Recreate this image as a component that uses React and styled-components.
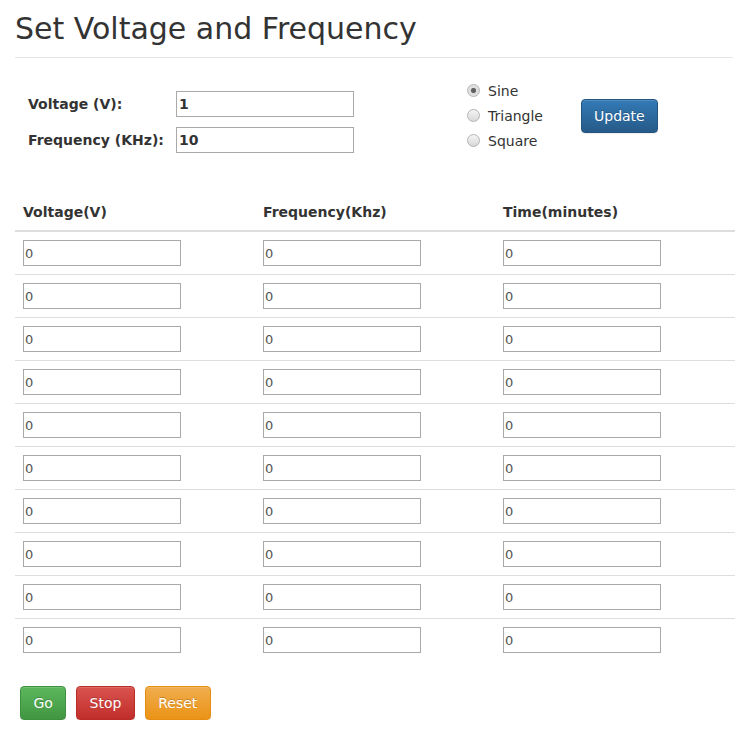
import styled, { createGlobalStyle } from "styled-components";

const GlobalStyle = createGlobalStyle`
  html, body {
    margin: 0;
    padding: 0;
    background: #fff;
  }
  body {
    font-family: "DejaVu Sans", sans-serif;
    font-size: 14px;
    line-height: 20px;
    color: #333;
  }
`;

const Page = styled.div`
  padding: 0 15px;
`;

const Header = styled.div`
  padding: 12px 0 12px;
  border-bottom: 1px solid #e5e5e5;
`;

const Title = styled.h1`
  margin: 0;
  font-size: 30px;
  line-height: 33px;
  font-weight: normal;
  color: #333;
`;

const Settings = styled.div`
  display: flex;
  align-items: flex-start;
`;

const FormGrid = styled.div`
  display: grid;
  grid-template-columns: 148px 178px;
  grid-auto-rows: 26px;
  row-gap: 10px;
  margin: 33px 0 0 13px;
`;

const FieldLabel = styled.label`
  display: flex;
  align-items: center;
  font-weight: bold;
  font-size: 14px;
`;

const FieldInput = styled.input`
  box-sizing: border-box;
  width: 178px;
  height: 26px;
  border: 1px solid #a9a9a9;
  padding: 0 2px;
  font-family: "DejaVu Sans", sans-serif;
  font-size: 14px;
  font-weight: bold;
  color: #333;
  outline: none;
`;

const RadioGroup = styled.div`
  display: flex;
  flex-direction: column;
  width: 114px;
  margin: 20px 0 0 113px;
`;

const RadioItem = styled.label`
  display: flex;
  align-items: center;
  gap: 8px;
  height: 25px;
  font-size: 14px;
  color: #333;
`;

const Radio = styled.input`
  appearance: none;
  box-sizing: border-box;
  width: 13px;
  height: 13px;
  margin: 0;
  border-radius: 50%;
  border: 1px solid #b4b4b4;
  background: linear-gradient(to bottom, #f4f4f4, #d8d8d8);

  &:checked {
    background: radial-gradient(
      circle,
      #5a5a5a 0,
      #6a6a6a 2.2px,
      #dcdcdc 3px,
      #e8e8e8 100%
    );
  }
`;

const Button = styled.button`
  font-family: "DejaVu Sans", sans-serif;
  font-size: 14px;
  line-height: 20px;
  padding: 6px 12.4px;
  border: 1px solid ${({ $border }) => $border};
  border-radius: 4px;
  color: #fff;
  text-shadow: 0 -1px 0 rgba(0, 0, 0, 0.2);
  background-image: linear-gradient(
    to bottom,
    ${({ $from }) => $from} 0,
    ${({ $to }) => $to} 100%
  );
  box-shadow: inset 0 1px 0 rgba(255, 255, 255, 0.15),
    0 1px 1px rgba(0, 0, 0, 0.075);
  cursor: pointer;
`;

const UpdateButton = styled(Button)`
  margin-top: 41px;
  padding: 6px 12px;
`;

const Table = styled.table`
  width: 720px;
  margin-top: 41px;
  border-collapse: collapse;
  border-spacing: 0;
`;

const Th = styled.th`
  width: 240px;
  padding: 8px;
  text-align: left;
  font-weight: bold;
  font-size: 14px;
  line-height: 20px;
  border-bottom: 2px solid #ddd;
`;

const Td = styled.td`
  padding: 8px;
  border-top: 1px solid #ddd;
  line-height: 0;
`;

const CellInput = styled.input`
  box-sizing: border-box;
  width: 158px;
  height: 26px;
  border: 1px solid #a9a9a9;
  padding: 0 1px;
  font-family: "DejaVu Sans", sans-serif;
  font-size: 13px;
  color: #555;
  outline: none;
`;

const Actions = styled.div`
  display: flex;
  gap: 10px;
  margin: 25px 0 0 5px;
`;

const colors = {
  primary: { $from: "#337ab7", $to: "#265a88", $border: "#245580" },
  success: { $from: "#5cb85c", $to: "#419641", $border: "#3e8f3e" },
  danger: { $from: "#d9534f", $to: "#c12e2a", $border: "#b92c28" },
  warning: { $from: "#f0ad4e", $to: "#eb9316", $border: "#e38d13" },
};

const rows = Array.from({ length: 10 }, (_, i) => i);

export default function App() {
  return (
    <Page>
      <GlobalStyle />
      <Header>
        <Title>Set Voltage and Frequency</Title>
      </Header>

      <Settings>
        <FormGrid>
          <FieldLabel>Voltage (V):</FieldLabel>
          <FieldInput defaultValue="1" />
          <FieldLabel>Frequency (KHz):</FieldLabel>
          <FieldInput defaultValue="10" />
        </FormGrid>

        <RadioGroup>
          <RadioItem>
            <Radio type="radio" name="wave" defaultChecked />
            Sine
          </RadioItem>
          <RadioItem>
            <Radio type="radio" name="wave" />
            Triangle
          </RadioItem>
          <RadioItem>
            <Radio type="radio" name="wave" />
            Square
          </RadioItem>
        </RadioGroup>

        <UpdateButton {...colors.primary}>Update</UpdateButton>
      </Settings>

      <Table>
        <thead>
          <tr>
            <Th>Voltage(V)</Th>
            <Th>Frequency(Khz)</Th>
            <Th>Time(minutes)</Th>
          </tr>
        </thead>
        <tbody>
          {rows.map((r) => (
            <tr key={r}>
              <Td>
                <CellInput defaultValue="0" />
              </Td>
              <Td>
                <CellInput defaultValue="0" />
              </Td>
              <Td>
                <CellInput defaultValue="0" />
              </Td>
            </tr>
          ))}
        </tbody>
      </Table>

      <Actions>
        <Button {...colors.success}>Go</Button>
        <Button {...colors.danger}>Stop</Button>
        <Button {...colors.warning}>Reset</Button>
      </Actions>
    </Page>
  );
}
